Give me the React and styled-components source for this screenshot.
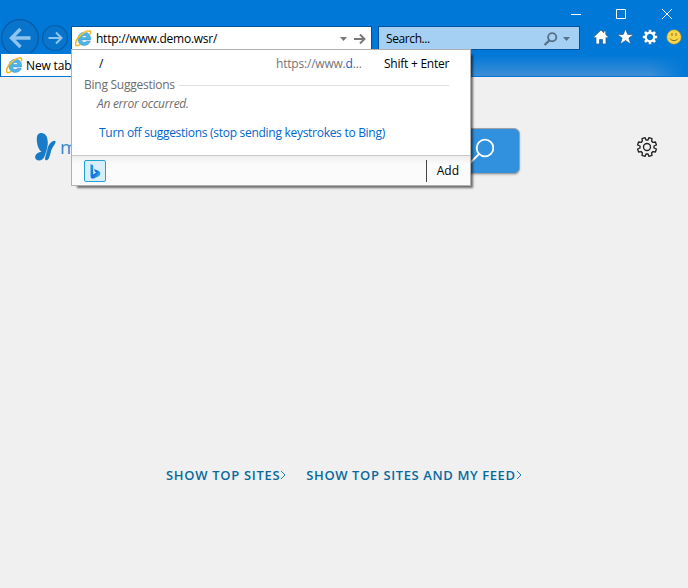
import React from 'react';
import styled, { createGlobalStyle } from 'styled-components';

const Global = createGlobalStyle`
  * { box-sizing: border-box; }
  body { margin: 0; overflow: hidden; font-family: "Open Sans", "Noto Sans", sans-serif; font-size: 12px; color: #000; }
  svg { display: block; flex: none; }
`;

const Window = styled.div`
  width: 688px;
  height: 588px;
  display: flex;
  flex-direction: column;
  position: relative;
  background: #f0f0f0;
  overflow: hidden;
`;

const Text = styled.span`
  font-size: ${p => p.$size || 12}px;
  letter-spacing: ${p => p.$track ?? -0.25}px;
  color: ${p => p.$color || 'inherit'};
  font-style: ${p => (p.$italic ? 'italic' : 'normal')};
  font-weight: ${p => p.$weight || 400};
  line-height: 16px;
  white-space: pre;
`;

const TitleBar = styled.header`
  height: 26px;
  background: #0078d7;
  display: flex;
  justify-content: flex-end;
  align-items: center;
  gap: 34px;
  padding: 2px 15px 0 0;
`;

const NavBar = styled.nav`
  height: 27px;
  background: #0078d7;
  display: flex;
  align-items: flex-start;
`;

const HistoryButtons = styled.div`
  width: 71px;
  height: 35px;
  margin-top: -8px;
  flex: none;
`;

const AddressBar = styled.div`
  width: 301px;
  height: 24px;
  border: 1px solid #00529a;
  background: #fff;
  display: flex;
  align-items: center;
  padding: 1px 5px 0 3px;
  gap: 4px;
`;

const AddressActions = styled.div`
  display: flex;
  align-items: center;
  gap: 7px;
`;

const Spacer = styled.div`
  flex: 1;
`;

const SearchBar = styled.div`
  width: 202px;
  height: 24px;
  margin-left: 6px;
  border: 1px solid #00529a;
  background: #a5d0f3;
  display: flex;
  align-items: center;
  padding: 1px 9px 0 7px;
  gap: 5px;
`;

const Tools = styled.div`
  display: flex;
  align-items: center;
  gap: 8px;
  padding: 2px 0 0 13px;
`;

const TabStrip = styled.div`
  height: 24px;
  position: relative;
  background: linear-gradient(90deg, transparent 650px, #0078d7 686px), linear-gradient(#0078d7 2px, #3b8dd6 22px);
  border-bottom: 1px solid #0078d7;
  display: flex;
`;

const Tab = styled.div`
  width: 100px;
  height: 24px;
  background: #fff;
  border: 1px solid #0078d7;
  border-left-color: #0060b0;
  display: flex;
  align-items: center;
  gap: 3px;
  padding: 1px 0 0 5px;
`;

const Page = styled.main`
  flex: 1;
  display: flex;
  flex-direction: column;
`;

const PageHeader = styled.div`
  height: 97px;
  margin-top: 51px;
  display: flex;
  align-items: flex-start;
`;

const Brand = styled.div`
  display: flex;
  align-items: center;
  width: 380px;
  padding: 4px 0 0 34px;
  gap: 4px;
`;

const SearchButton = styled.div`
  width: 140px;
  height: 46px;
  border: 1px solid #a2a2a2;
  border-radius: 6px;
  background: #3291df;
  box-shadow: 0 1px 2px #bbb;
  display: flex;
  align-items: center;
  justify-content: flex-end;
  padding: 0 25px 1px 0;
`;

const Settings = styled.div`
  margin: 8px 0 0 116px;
`;

const Links = styled.div`
  display: flex;
  gap: 20px;
  margin: 241px 0 0 166px;
`;

const PageLink = styled.a`
  display: flex;
  align-items: center;
  height: 18px;
`;

const Menu = styled.section`
  position: absolute;
  left: 71px;
  top: 49px;
  width: 400px;
  height: 137px;
  background: #fff;
  border: 1px solid #b0b0b0;
  box-shadow: 4px 4px 2px -2px rgba(0, 0, 0, 0.55);
  clip-path: inset(0 -8px -8px 0);
  display: flex;
  flex-direction: column;
`;

const MenuRow = styled.div`
  display: flex;
  align-items: center;
  height: ${p => p.$h}px;
  padding-left: ${p => p.$left}px;
  padding-top: ${p => p.$drop || 0}px;
`;

const Column = styled.div`
  width: ${p => p.$w}px;
  display: flex;
`;

const Rule = styled.div`
  flex: 1;
  height: 1px;
  background: #dfdfdf;
  margin: 0 21px 0 4px;
`;

const MenuFooter = styled.footer`
  height: 30px;
  margin-top: auto;
  border-top: 1px solid #c9cbcb;
  background: linear-gradient(#ededed, #fbfbfb 8px);
  display: flex;
  align-items: center;
  justify-content: space-between;
  padding: 0 11px 0 12px;
`;

const Provider = styled.div`
  width: 22px;
  height: 22px;
  border: 1px solid #26a0da;
  border-radius: 2px;
  background: #d6effb;
  display: flex;
  align-items: center;
  justify-content: center;
`;

const AddButton = styled.div`
  height: 22px;
  border-left: 1px solid #444;
  padding-left: 10px;
  display: flex;
  align-items: center;
`;

function IeLogo() {
  return (
    <svg width="17" height="17" viewBox="0 0 17 17" fill="none">
      <path d="M15.6 9.9H6.600c.1 1.500 1.200 2.400 2.800 2.400 1 0 1.800-.3 2.300-1.000h3.600C14.500 13.800 12.300 15.400 9.300 15.400c-3.800 0-6.400-2.600-6.400-6.400 0-3.800 2.700-6.600 6.500-6.700 3.700-.1 6.500 2.500 6.200 7.600zM6.800 7.400h5.100c-.2-1.200-1.100-1.900-2.500-1.900s-2.300.7-2.600 1.900z" fill="#4db5e8" fillRule="evenodd" stroke="#2a86bf" strokeWidth=".5" />
      <path d="M15.200 4.200c.8-1.800.6-2.900-.5-3.100C12 .7 7.600 3.100 4.200 6.500 1 10 -.3 14 1 15.300c.8.800 2.400.300 4.200-.9" stroke="#f2b51d" strokeWidth="1.600" />
      <path d="M14.500 1.100C12 .7 7.600 3.100 4.200 6.500" stroke="#ffdb55" strokeWidth=".7" />
    </svg>
  );
}

function HistoryIcons() {
  return (
    <svg width="70" height="35" viewBox="0 18 70 35" fill="none">
      <circle cx="20" cy="38" r="18.300" fill="#0874cb" stroke="#075ca7" strokeWidth="1.300" />
      <circle cx="55" cy="38" r="12.500" fill="#0874cb" stroke="#075ca7" strokeWidth="1.200" />
      <path d="M30.500 38H12M20.500 29l-9 9 9 9" stroke="#8fc4ee" strokeWidth="3.400" />
      <path d="M48.500 38H61M56 32.500l5.500 5.500-5.500 5.500" stroke="#8fc4ee" strokeWidth="2.100" />
    </svg>
  );
}

const Caret = ({ color }) => (
  <svg width="7" height="4"><path d="M0 0h7L3.500 4z" fill={color} /></svg>
);

const GoArrow = () => (
  <svg width="12" height="12" fill="none" stroke="#777" strokeWidth="1.900">
    <path d="M0 6h10.500M6 1.500L10.500 6 6 10.500" />
  </svg>
);

const NavSearchIcon = () => (
  <svg width="14" height="14" fill="none" stroke="#56728b" strokeWidth="1.900">
    <circle cx="8.200" cy="5.200" r="4.100" /><path d="M5.500 8.300L.5 13" strokeWidth="2.300" />
  </svg>
);

const WindowIcon = ({ d }) => (
  <svg width="12" height="12" fill="none" stroke="#fff"><path d={d} /></svg>
);

const teeth = [0, 45, 90, 135, 180, 225, 270, 315];

function ToolIcons() {
  return (
    <Tools>
      <svg width="16" height="18" viewBox="0 0 16 18">
        <path d="M8 2L.7 9l1.300 1.200L3 9.400V16h3.500v-4.500h3V16H13V9.400l1 .8L15.300 9 12.800 6.600V3h-2v1.700z" fill="#fff" stroke="#245987" strokeWidth=".7" />
      </svg>
      <svg width="17" height="18" viewBox="0 0 17 18">
        <path d="M8.500 .8l2.200 5.600h6l-4.800 3.700 1.900 6.200-5.300-3.800-5.300 3.800 1.900-6.200L.3 6.400h6z" fill="#fff" stroke="#245987" strokeWidth=".7" />
      </svg>
      <svg width="16" height="18" viewBox="0 0 16 18">
        <g transform="translate(8 9)">
          {teeth.map(a => <path key={a} d="M-1.500-4.800v-2.500h3v2.500" transform={`rotate(${a})`} fill="#fff" stroke="#245987" strokeWidth=".4" />)}
          <circle r="4.300" fill="#0078d7" stroke="#fff" strokeWidth="2.200" />
        </g>
      </svg>
      <svg width="16" height="18" viewBox="0 0 16 18">
        <circle cx="8" cy="9" r="7.200" fill="#f9d748" stroke="#b88e30" strokeWidth=".5" />
        <path d="M6 5v3M10 5v3M4 10.500c1.800 2.800 6.200 2.800 8 0" fill="none" stroke="#8b6b21" strokeWidth="1" />
      </svg>
    </Tools>
  );
}

const Butterfly = () => (
  <svg width="22" height="30" fill="#177bc7">
    <path d="M2.800 7C2.800 3 4.500 1 7.200 1c4.300 0 6.600 4 6.600 9.500 0 3.500-.8 6.200-1.600 9L10.500 24.500C9.300 27.200 7 28.700 4.700 28.500 2 28.300.7 26.500 1.200 24.300c.6-2.600 3-3.900 6.300-4.500C4.300 17.500 2.800 12 2.800 7z" />
    <path d="M12.600 18.500C13.800 14 17 9.300 20 8.800c1.600-.3 2 1 1.100 2.700-1.400 2.700-3.400 4.900-4.100 7.800-.5 2.400-1 4-1.800 6.100-.8 1.900-1.900 3-3.100 2.800-1.500-.3-1.300-2-.9-3.500z" />
    <path d="M13.700 14.500c-.4 4-1.900 7.500-2.900 12" fill="none" stroke="#b9d7ec" strokeWidth=".5" />
  </svg>
);

const GearOutline = () => (
  <svg width="22" height="22" viewBox="0 0 22 22" fill="none" stroke="#222" strokeWidth="1.350" strokeLinejoin="round">
    <path d="M10 4L9 1.600 6 2.600 6.400 5.100 5.100 6.400 2.600 6 1.600 9 4 10v2l-2.400 1 1 3 2.500-.4 1.300 1.300-.4 2.500 3 1 1-2.400h2l1 2.400 3-1-.4-2.500 1.300-1.300 2.500.4 1-3-2.400-1v-2l2.400-1-1-3-2.500.4-1.300-1.300.4-2.500-3-1-1 2.400z" />
    <circle cx="11" cy="11" r="3.500" />
  </svg>
);

const BingIcon = () => (
  <svg width="12" height="16" viewBox="0 0 12 16">
    <defs><linearGradient id="bing" x1="0" y1="0" x2="1" y2="1"><stop stopColor="#299bea" /><stop offset=".55" stopColor="#166fe0" /><stop offset="1" stopColor="#39cced" /></linearGradient></defs>
    <path d="M1.500 1l2.700 1.200v9.300L7.200 9.600 5.900 8.800 5 6l4.300 1.700c1.400.6 2 1.600 2 2.900 0 1.300-.5 2.100-1.500 2.700L5.500 15.300C3.200 16.300 1.500 15 1.500 13z" fill="url(#bing)" />
  </svg>
);

const Chevron = () => (
  <svg width="6" height="10" fill="none" stroke="#2584b4"><path d="M1 1l4 4-4 4" /></svg>
);

export default function App() {
  return (
    <>
      <Global />
      <Window>
        <TitleBar>
          <WindowIcon d="M2 6.500h10" />
          <WindowIcon d="M1.500 1.500h9v9h-9z" />
          <WindowIcon d="M1 1l10 10M11 1L1 11" />
        </TitleBar>
        <NavBar>
          <HistoryButtons><HistoryIcons /></HistoryButtons>
          <AddressBar>
            <IeLogo />
            <Text>http://www.demo.wsr/</Text>
            <Spacer />
            <AddressActions>
              <Caret color="#777" />
              <GoArrow />
            </AddressActions>
          </AddressBar>
          <SearchBar>
            <Text $track={-0.4}>Search...</Text>
            <Spacer />
            <NavSearchIcon />
            <Caret color="#56728b" />
          </SearchBar>
          <ToolIcons />
        </NavBar>
        <TabStrip>
          <Tab><IeLogo /><Text $track={-0.15}>New tab</Text></Tab>
        </TabStrip>
        <Page>
          <PageHeader>
            <Brand><Butterfly /><Text $size={19} $color="#3488c9">msn</Text></Brand>
            <SearchButton>
              <svg width="28" height="28" fill="none" stroke="#fff" strokeWidth="1.800"><circle cx="19" cy="11" r="8.300" /><path d="M13 17L3 27" /></svg>
            </SearchButton>
            <Settings><GearOutline /></Settings>
          </PageHeader>
          <Links>
            <PageLink><Text $size={13} $weight={600} $color="#086a9e" $track={0.69}>SHOW TOP SITES</Text><Chevron /></PageLink>
            <PageLink><Text $size={13} $weight={600} $color="#086a9e" $track={0.6}>SHOW TOP SITES AND MY FEED</Text><Chevron /></PageLink>
          </Links>
        </Page>
        <Menu>
          <MenuRow $h={26} $left={27} $drop={1}>
            <Column $w={177}><Text>/</Text></Column>
            <Column $w={108}><Text $color="#747474" $track={-0.2}>https://www.</Text><Text $color="#0066cc">d</Text><Text $color="#747474" $track={-0.1}>...</Text></Column>
            <Text>Shift + Enter</Text>
          </MenuRow>
          <MenuRow $h={18} $left={12}><Text $color="#6d6d6d">Bing Suggestions</Text><Rule /></MenuRow>
          <MenuRow $h={18} $left={25} $drop={1}><Text $color="#6d6d6d" $italic $track={-0.28}>An error occurred.</Text></MenuRow>
          <MenuRow $h={40} $left={27} $drop={1}><Text $color="#0066cc" $track={-0.285}>Turn off suggestions (stop sending keystrokes to Bing)</Text></MenuRow>
          <MenuFooter>
            <Provider><BingIcon /></Provider>
            <AddButton><Text $track={0}>Add</Text></AddButton>
          </MenuFooter>
        </Menu>
      </Window>
    </>
  );
}
